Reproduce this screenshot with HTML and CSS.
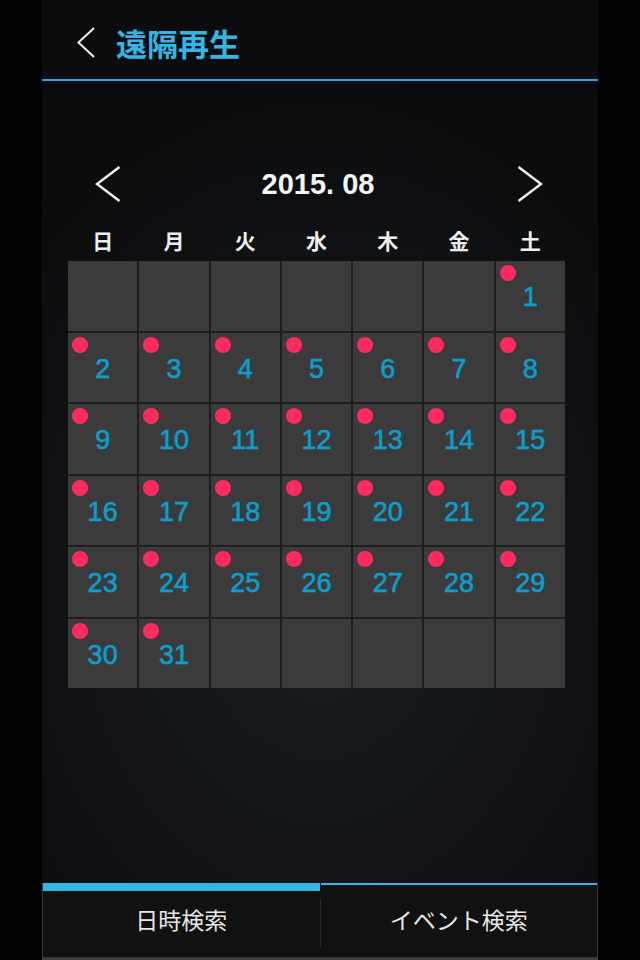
FILE: index.html
```html
<!DOCTYPE html>
<html lang="ja">
<head>
<meta charset="utf-8">
<title>遠隔再生</title>
<link rel="stylesheet" href="styles.css">
</head>
<body>
<div class="panel">
  <header class="header">
    <svg class="back" width="20" height="31" viewBox="0 0 20 31"><polyline points="18,1 2.5,15.5 18,30" fill="none" stroke="#f2f2f2" stroke-width="2"/></svg>
    <h1 class="title">遠隔再生</h1>
  </header>
  <main class="main">
    <div class="month-nav">
      <svg class="chev" width="26" height="36" viewBox="0 0 26 36"><polyline points="24.5,1 2,18 24.5,35" fill="none" stroke="#f2f2f2" stroke-width="2.4"/></svg>
      <div class="month">2015. 08</div>
      <svg class="chev" width="26" height="36" viewBox="0 0 26 36"><polyline points="1.5,1 24,18 1.5,35" fill="none" stroke="#f2f2f2" stroke-width="2.4"/></svg>
    </div>
    <div class="weekdays">
      <span>日</span><span>月</span><span>火</span><span>水</span><span>木</span><span>金</span><span>土</span>
    </div>
    <div class="grid">
      <div class="cell"></div><div class="cell"></div><div class="cell"></div><div class="cell"></div><div class="cell"></div><div class="cell"></div>
      <div class="cell rec"><span class="num">1</span></div>
      <div class="cell rec"><span class="num">2</span></div>
      <div class="cell rec"><span class="num">3</span></div>
      <div class="cell rec"><span class="num">4</span></div>
      <div class="cell rec"><span class="num">5</span></div>
      <div class="cell rec"><span class="num">6</span></div>
      <div class="cell rec"><span class="num">7</span></div>
      <div class="cell rec"><span class="num">8</span></div>
      <div class="cell rec"><span class="num">9</span></div>
      <div class="cell rec"><span class="num">10</span></div>
      <div class="cell rec"><span class="num">11</span></div>
      <div class="cell rec"><span class="num">12</span></div>
      <div class="cell rec"><span class="num">13</span></div>
      <div class="cell rec"><span class="num">14</span></div>
      <div class="cell rec"><span class="num">15</span></div>
      <div class="cell rec"><span class="num">16</span></div>
      <div class="cell rec"><span class="num">17</span></div>
      <div class="cell rec"><span class="num">18</span></div>
      <div class="cell rec"><span class="num">19</span></div>
      <div class="cell rec"><span class="num">20</span></div>
      <div class="cell rec"><span class="num">21</span></div>
      <div class="cell rec"><span class="num">22</span></div>
      <div class="cell rec"><span class="num">23</span></div>
      <div class="cell rec"><span class="num">24</span></div>
      <div class="cell rec"><span class="num">25</span></div>
      <div class="cell rec"><span class="num">26</span></div>
      <div class="cell rec"><span class="num">27</span></div>
      <div class="cell rec"><span class="num">28</span></div>
      <div class="cell rec"><span class="num">29</span></div>
      <div class="cell rec"><span class="num">30</span></div>
      <div class="cell rec"><span class="num">31</span></div>
      <div class="cell"></div><div class="cell"></div><div class="cell"></div><div class="cell"></div><div class="cell"></div>
    </div>
  </main>
  <nav class="tabs">
    <div class="tab active">日時検索</div>
    <div class="divider"></div>
    <div class="tab">イベント検索</div>
  </nav>
</div>
</body>
</html>
```
FILE: styles.css
```css
* { box-sizing: border-box; }
html, body { margin: 0; padding: 0; }
body {
  background: #020202;
  font-family: "Liberation Sans", "Noto Sans CJK JP", sans-serif;
  color: #f2f2f2;
}
.panel {
  width: 556px;
  height: 960px;
  margin-left: 42px;
  display: flex;
  flex-direction: column;
  background: radial-gradient(ellipse 75% 55% at 50% 62%, #191d21 0%, #111316 55%, #0a0b0d 100%);
}
.header {
  height: 81px;
  flex: none;
  display: flex;
  align-items: center;
  padding: 6px 0 0 34px;
  border-bottom: 2px solid #2fa9d9;
  background: #0b0c0e;
}
.back { display: block; flex: none; }
.title {
  margin: 0 0 0 20px;
  font-family: "Noto Sans CJK JP", sans-serif;
  font-size: 31px;
  font-weight: 700;
  color: #33b5e5;
  line-height: 1;
}
.main {
  flex: 1;
  padding-top: 83px;
}
.month-nav {
  height: 40px;
  display: flex;
  align-items: center;
  justify-content: space-between;
  padding: 0 55px 0 53px;
}
.chev { display: block; }
.month {
  font-family: "Liberation Sans", sans-serif;
  font-weight: 700;
  font-size: 29px;
  color: #f4f4f4;
  padding-right: 2px;
}
.weekdays {
  margin: 24px 0 0 26px;
  width: 497px;
  height: 24px;
  display: grid;
  grid-template-columns: repeat(7, 1fr);
  column-gap: 2px;
}
.weekdays span {
  text-align: center;
  font-family: "Noto Sans CJK JP", sans-serif;
  font-weight: 700;
  font-size: 21px;
  line-height: 24px;
  color: #eeeeee;
}
.grid {
  margin: 9px 0 0 26px;
  width: 497px;
  display: grid;
  grid-template-columns: repeat(7, 1fr);
  grid-auto-rows: 69.5px;
  gap: 2px;
  background: #1c1e20;
}
.cell {
  background: #3b3b3b;
  position: relative;
  display: flex;
  align-items: center;
  justify-content: center;
}
.rec::before {
  content: "";
  position: absolute;
  left: 4px;
  top: 4px;
  width: 16px;
  height: 16px;
  border-radius: 50%;
  background: #ff2b5e;
}
.num {
  font-family: "Liberation Sans", sans-serif;
  font-size: 27px;
  color: #0a9fcc;
  -webkit-text-stroke: 0.6px #0a9fcc;
  line-height: 1;
  padding-top: 4px;
}
.tabs {
  height: 77px;
  flex: none;
  display: flex;
  align-items: stretch;
  background: #111111;
  border-left: 1px solid #3a3a3a;
  border-right: 1px solid #3a3a3a;
  border-bottom: 3px solid #3c3c3c;
}
.tab {
  flex: 1;
  display: flex;
  align-items: center;
  justify-content: center;
  font-family: "Noto Sans CJK JP", sans-serif;
  font-size: 23px;
  color: #e6e6e6;
  border-top: 2px solid #33b5e5;
  padding-bottom: 4px;
}
.tab.active {
  border-top: 8px solid #33b5e5;
  padding-bottom: 10px;
}
.divider {
  width: 1px;
  flex: none;
  align-self: center;
  height: 48px;
  margin-top: 6px;
  background: #2a2a2a;
}
```
